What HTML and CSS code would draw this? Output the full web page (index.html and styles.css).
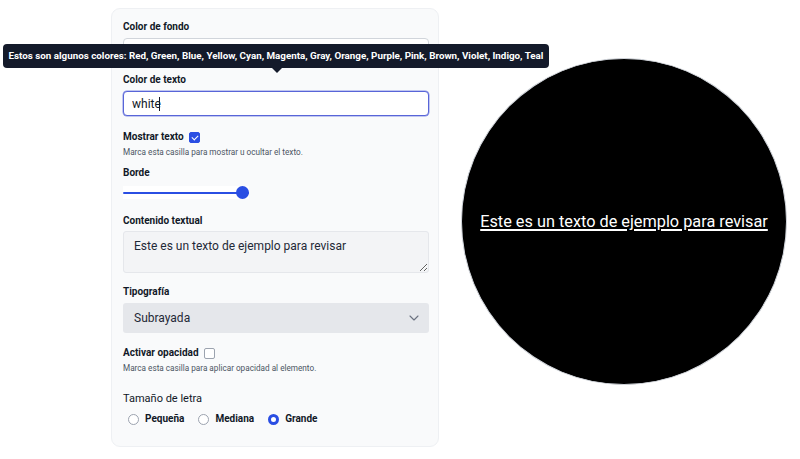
FILE: index.html
```html
<!DOCTYPE html>
<html lang="es">
<head>
<meta charset="utf-8">
<title>Editor</title>
<link rel="stylesheet" href="styles.css">
</head>
<body>
<main class="page">
  <form class="panel">
    <div class="field">
      <label class="label" for="bg">Color de fondo</label>
      <input class="input" id="bg" type="text" value="">
    </div>
    <div class="field field-text">
      <label class="label" for="fg">Color de texto</label>
      <input class="input input-focus" id="fg" type="text" value="white">
      <span class="caret"></span>
      <div class="tooltip">Estos son algunos colores: Red, Green, Blue, Yellow, Cyan, Magenta, Gray, Orange, Purple, Pink, Brown, Violet, Indigo, Teal</div>
    </div>
    <div class="check-row row-show">
      <label class="label" for="show">Mostrar texto</label>
      <input class="check" id="show" type="checkbox" checked>
    </div>
    <p class="help">Marca esta casilla para mostrar u ocultar el texto.</p>
    <label class="label label-border" for="border">Borde</label>
    <input class="range" id="border" type="range" min="0" max="10" value="10">
    <label class="label label-content" for="content">Contenido textual</label>
    <textarea class="textarea" id="content">Este es un texto de ejemplo para revisar</textarea>
    <label class="label label-typo" for="typo">Tipografía</label>
    <div class="select-wrap">
      <select class="select" id="typo">
        <option>Subrayada</option>
        <option>Normal</option>
        <option>Negrita</option>
      </select>
      <svg class="chevron" width="10" height="6" viewBox="0 0 10 6"><path d="M1 1l4 4 4-4" fill="none" stroke="#6b7280" stroke-width="1.1" stroke-linecap="round" stroke-linejoin="round"/></svg>
    </div>
    <div class="check-row row-opacity">
      <label class="label" for="op">Activar opacidad</label>
      <input class="check" id="op" type="checkbox">
    </div>
    <p class="help">Marca esta casilla para aplicar opacidad al elemento.</p>
    <p class="size-title">Tamaño de letra</p>
    <div class="radios">
      <label class="radio"><input type="radio" name="size"><span>Pequeña</span></label>
      <label class="radio"><input type="radio" name="size"><span>Mediana</span></label>
      <label class="radio"><input type="radio" name="size" checked><span>Grande</span></label>
    </div>
  </form>
  <div class="preview">
    <span class="preview-text">Este es un texto de ejemplo para revisar</span>
  </div>
</main>
</body>
</html>
```

FILE: styles.css
```css
* { box-sizing: border-box; }
html, body { margin: 0; padding: 0; background: #ffffff; }
body {
  font-family: Roboto, "Liberation Sans", Arial, sans-serif;
  color: #111827;
  width: 800px;
  height: 459px;
  overflow: hidden;
}
.page {
  display: flex;
  align-items: flex-start;
  padding: 8px 0 0 111px;
  gap: 22px;
}
.panel {
  position: relative;
  width: 328px;
  height: 439px;
  margin: 0;
  padding: 11px 11px 0 11px;
  background: #f9fafb;
  border: 1px solid #eef0f3;
  border-radius: 9px;
  display: flex;
  flex-direction: column;
  align-items: flex-start;
}
.label {
  display: block;
  font-size: 10px;
  font-weight: 700;
  line-height: 14px;
  color: #111827;
}
.field { display: flex; flex-direction: column; width: 100%; }
.field .label { margin-bottom: 4px; }
.field-text { position: relative; margin-top: 10px; }
.input {
  width: 306px;
  height: 25px;
  border: 1px solid #d1d5db;
  border-radius: 4px;
  background: #ffffff;
  font-family: inherit;
  font-size: 12px;
  color: #111827;
  padding: 0 8px;
  outline: none;
}
.input-focus {
  border: 1.5px solid #5865d8;
  box-shadow: 0 0 0 0.5px #8a93e6;
}
.caret {
  position: absolute;
  left: 36px;
  top: 24px;
  width: 1px;
  height: 14px;
  background: #111827;
}
.tooltip {
  position: absolute;
  left: -120px;
  top: -29px;
  width: 546px;
  height: 24px;
  background: #141a2a;
  color: #ffffff;
  border-radius: 4px;
  font-size: 9.8px;
  font-weight: 700;
  line-height: 24px;
  text-align: center;
  white-space: nowrap;
}
.tooltip::after {
  content: "";
  position: absolute;
  left: 269px;
  bottom: -5px;
  border-left: 5px solid transparent;
  border-right: 5px solid transparent;
  border-top: 5px solid #141a2a;
}
.check-row {
  display: flex;
  align-items: center;
  gap: 5px;
}
.row-show { margin-top: 14px; }
.row-opacity { margin-top: 13px; }
.check {
  appearance: none;
  -webkit-appearance: none;
  margin: 0;
  width: 11px;
  height: 11px;
  border: 1px solid #9ca3af;
  border-radius: 2px;
  background: #ffffff;
  position: relative;
}
.check:checked {
  background: #2a4ee3;
  border-color: #2a4ee3;
}
.check:checked::after {
  content: "";
  position: absolute;
  left: 3px;
  top: 1px;
  width: 3px;
  height: 5px;
  border: solid #ffffff;
  border-width: 0 1.3px 1.3px 0;
  transform: rotate(45deg);
}
.help {
  margin: 3px 0 0 0;
  font-size: 8.2px;
  line-height: 11px;
  color: #4b5563;
}
.label-border { margin-top: 8px; }
.range {
  -webkit-appearance: none;
  appearance: none;
  margin: 6px 0 0 0;
  width: 126px;
  height: 13px;
  background: #ffffff;
}
.range::-webkit-slider-runnable-track {
  height: 2px;
  background: #2a4ee3;
  border-radius: 1px;
}
.range::-webkit-slider-thumb {
  -webkit-appearance: none;
  width: 13px;
  height: 13px;
  margin-top: -5.5px;
  border-radius: 50%;
  background: #2a4ee3;
  border: none;
}
.label-content { margin-top: 15px; }
.textarea {
  margin-top: 3px;
  width: 306px;
  height: 42px;
  background: #f3f4f6;
  border: 1px solid #e5e7eb;
  border-radius: 3px;
  padding: 7px 10px;
  font-family: inherit;
  font-size: 12px;
  line-height: 14px;
  color: #1f2937;
  resize: vertical;
  outline: none;
}
.label-typo { margin-top: 12px; }
.select-wrap {
  position: relative;
  margin-top: 4px;
  width: 306px;
  height: 30px;
}
.select {
  -webkit-appearance: none;
  appearance: none;
  width: 100%;
  height: 100%;
  background: #e5e7eb;
  border: none;
  border-radius: 3px;
  padding: 0 11px;
  font-family: inherit;
  font-size: 12px;
  color: #1f2937;
  outline: none;
}
.chevron {
  position: absolute;
  right: 10px;
  top: 12px;
  pointer-events: none;
}
.size-title {
  margin: 17px 0 0 0;
  font-size: 11px;
  line-height: 16px;
  color: #111827;
}
.radios {
  display: flex;
  gap: 14px;
  margin-top: 6px;
  padding-left: 5px;
}
.radio {
  display: flex;
  align-items: center;
  gap: 6px;
  font-size: 10px;
  font-weight: 700;
  line-height: 12px;
}
.radio input {
  -webkit-appearance: none;
  appearance: none;
  margin: 0;
  width: 11px;
  height: 11px;
  border: 1px solid #9ca3af;
  border-radius: 50%;
  background: #ffffff;
}
.radio input:checked {
  border: 3px solid #2a4ee3;
  background: #ffffff;
}
.preview {
  margin-top: 50px;
  width: 326px;
  height: 327px;
  border-radius: 50%;
  background: #000000;
  border: 1px solid #d1d5db;
  display: flex;
  align-items: center;
  justify-content: center;
}
.preview-text {
  color: #ffffff;
  font-size: 16.3px;
  text-decoration: underline;
  text-underline-offset: 2px;
  text-decoration-thickness: 1.5px;
}
```
